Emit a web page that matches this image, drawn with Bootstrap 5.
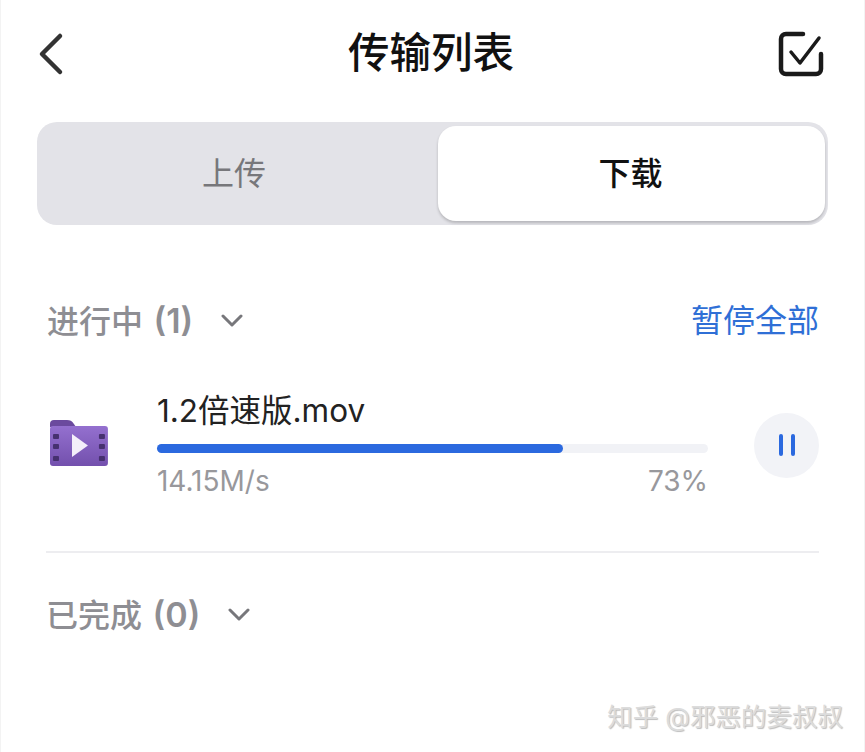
<!DOCTYPE html>
<html lang="zh-CN">
<head>
  <meta charset="UTF-8" />
  <meta name="viewport" content="width=device-width, initial-scale=1.0" />
  <title>传输列表</title>
  <link href="https://cdn.jsdelivr.net/npm/bootstrap@5.3.3/dist/css/bootstrap.min.css" rel="stylesheet" />
  <style>
    body {
      font-family: Inter, "Noto Sans CJK SC", sans-serif;
      background-color: #fff;
      overflow: hidden;
    }

    .screen {
      position: relative;
      width: 865px;
      height: 752px;
      border-left: 1px solid #f3f3f3;
      border-right: 1px solid #f3f3f3;
    }

    .top-bar {
      height: 122px;
      padding: 0 40px 14px 37px;
    }

    .top-side {
      width: 46px;
    }

    .top-title {
      font-size: 41.5px;
      font-weight: 500;
      color: #111;
      line-height: 1;
    }

    .seg-box {
      height: 103px;
      margin: 0 36px;
      padding: 4px 3px 4px 0;
      background-color: #e3e3e8;
      border-radius: 20px;
    }

    .seg-item {
      font-size: 32px;
      color: #77777b;
      width: 394px;
    }

    .seg-item-on {
      width: 387px;
      padding-right: 2px;
      color: #111;
      font-weight: 500;
      background-color: #fff;
      border-radius: 18px;
      box-shadow: 0 2px 3px rgba(0, 0, 0, .2);
    }

    .list-head {
      font-size: 32px;
      line-height: 1;
      color: #8e8e93;
      font-weight: 500;
    }

    .head-num {
      font-size: 34px;
      font-weight: 600;
      margin-left: 2px;
    }

    .head-open {
      margin: 79px 45px 0 46px;
    }

    .head-done {
      margin: 45px 0 0 45px;
    }

    .list-head svg {
      margin-left: 4px;
    }

    .pause-all {
      color: #2f6fd6;
      font-weight: 400;
    }

    .file-row {
      margin: 56px 45px 0 49px;
    }

    .file-icon {
      width: 58px;
      margin: 0 49px 5px 0;
    }

    .file-body {
      width: 552px;
    }

    .file-name {
      font-size: 31.5px;
      line-height: 34px;
      color: #222;
    }

    .load-track {
      height: 9px;
      margin-top: 16px;
      background-color: #f1f2f6;
      border-radius: 5px;
    }

    .load-fill {
      height: 100%;
      background-color: #2b69df;
      border-radius: 5px;
    }

    .file-meta {
      font-size: 28px;
      line-height: 30px;
      margin-top: 13px;
      color: #98989c;
    }

    .pause-btn {
      width: 65px;
      height: 65px;
      margin-left: 46px;
      background-color: #f2f3f7;
      border-radius: 50%;
    }

    .row-line {
      margin: 55px 45px 0;
      border-top: 2px solid #ededf0;
    }

    .mark-text {
      position: absolute;
      right: 21px;
      top: 702px;
      font-size: 25.5px;
      line-height: 30px;
      color: #dcdcdc;
      text-shadow: 1px 1px 1px #bdbdbd;
      white-space: nowrap;
    }
  </style>
</head>
<body>
  <div class="screen">

    <!-- Top bar -->
    <div class="top-bar d-flex justify-content-between align-items-center">
      <div class="top-side">
        <svg class="d-block" width="28" height="44" viewBox="0 0 28 44" fill="none" stroke="#333" stroke-width="4.5" stroke-linecap="round" stroke-linejoin="round">
          <path d="M22 4 4 22l18 18" />
        </svg>
      </div>
      <div class="top-title">传输列表</div>
      <svg class="top-side" width="46" height="46" viewBox="0 0 46 46" fill="none" stroke="#1a1a1a" stroke-linecap="round" stroke-linejoin="round">
        <path d="M25 3H8a5 5 0 0 0-5 5v30a5 5 0 0 0 5 5h30a5 5 0 0 0 5-5V23" stroke-width="4.5" />
        <path d="m13 21 9 11L41 7" stroke-width="3.5" />
      </svg>
    </div>

    <!-- Upload / download switch -->
    <div class="seg-box d-flex justify-content-between">
      <div class="seg-item d-flex align-items-center justify-content-center">上传</div>
      <div class="seg-item seg-item-on d-flex align-items-center justify-content-center">下载</div>
    </div>

    <!-- In progress -->
    <div class="list-head head-open d-flex justify-content-between align-items-center">
      <div class="d-flex align-items-center gap-4">
        <span>进行中 <span class="head-num">(1)</span></span>
        <svg width="22" height="14" viewBox="0 0 22 14" fill="none" stroke="#77777b" stroke-width="3" stroke-linecap="round" stroke-linejoin="round">
          <path d="m2 2 9 9 9-9" />
        </svg>
      </div>
      <span class="pause-all">暂停全部</span>
    </div>

    <div class="file-row d-flex align-items-center">
      <svg class="file-icon" width="58" height="46" viewBox="0 0 58 46">
        <defs>
          <linearGradient id="folderFill" x1="0" y1="0" x2="0" y2="1">
            <stop offset="0" stop-color="#9470cf" />
            <stop offset="1" stop-color="#7350ad" />
          </linearGradient>
        </defs>
        <path d="M0 4a4 4 0 0 1 4-4h13c3 0 5 1 7 4l2 3H0z" fill="#6b4a9e" />
        <rect y="6" width="58" height="40" rx="3" fill="url(#folderFill)" />
        <g fill="#46306f">
          <rect x="3" y="14" width="6" height="5" rx="1" />
          <rect x="3" y="24" width="6" height="5" rx="1" />
          <rect x="3" y="36" width="6" height="5" rx="1" />
          <rect x="49" y="14" width="6" height="5" rx="1" />
          <rect x="49" y="24" width="6" height="5" rx="1" />
          <rect x="49" y="36" width="6" height="5" rx="1" />
        </g>
        <path d="M22 14v23l16-11.500z" fill="#f4effa" />
      </svg>
      <div class="file-body">
        <div class="file-name">1.2倍速版.mov</div>
        <div class="load-track">
          <div class="load-fill" style="width: 73.6%"></div>
        </div>
        <div class="file-meta d-flex justify-content-between">
          <span>14.15M/s</span>
          <span>73%</span>
        </div>
      </div>
      <div class="pause-btn d-flex align-items-center justify-content-center">
        <svg width="18" height="24" viewBox="0 0 18 24" fill="none" stroke="#2b69df" stroke-width="4" stroke-linecap="round">
          <path d="M3 3v18M15 3v18" />
        </svg>
      </div>
    </div>

    <div class="row-line"></div>

    <!-- Finished -->
    <div class="list-head head-done d-flex align-items-center gap-4">
      <span>已完成 <span class="head-num">(0)</span></span>
      <svg width="22" height="14" viewBox="0 0 22 14" fill="none" stroke="#77777b" stroke-width="3" stroke-linecap="round" stroke-linejoin="round">
        <path d="m2 2 9 9 9-9" />
      </svg>
    </div>

    <div class="mark-text">知乎 @邪恶的麦叔叔</div>
  </div>

  <script src="https://cdn.jsdelivr.net/npm/bootstrap@5.3.3/dist/js/bootstrap.bundle.min.js"></script>
</body>
</html>
